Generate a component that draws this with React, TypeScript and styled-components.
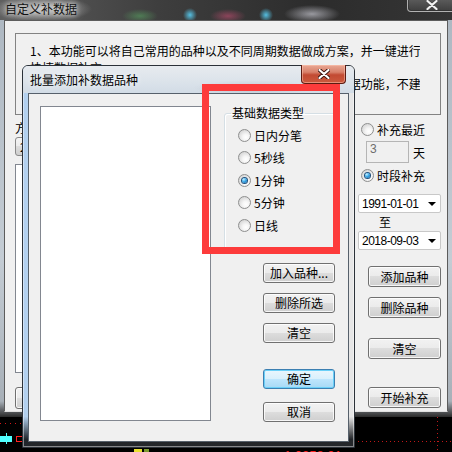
import React from 'react';
import styled, { createGlobalStyle, css } from 'styled-components';

const GlobalStyle = createGlobalStyle`
  html, body {
    margin: 0;
    padding: 0;
    background: #000;
  }
  body {
    font-family: "Noto Sans CJK SC", "Noto Sans", sans-serif;
    font-size: 12px;
    color: #000;
  }
  * {
    box-sizing: border-box;
  }
`;

const Screen = styled.div`
  position: relative;
  width: 452px;
  height: 452px;
  overflow: hidden;
  background: #000;
`;

/* ---------- background window ---------- */

const BgWindow = styled.div`
  height: 417px;
  display: flex;
  flex-direction: column;
`;

const BgTitleBar = styled.div`
  height: 20px;
  display: flex;
  justify-content: space-between;
  align-items: flex-start;
  padding-left: 5px;
  background:
    radial-gradient(ellipse 50px 13px at 42px 9px, rgba(205, 205, 205, 0.9), transparent),
    radial-gradient(ellipse 18px 7px at 140px 16px, rgba(90, 170, 100, 0.55), transparent),
    radial-gradient(circle 7px at 190px 15px, rgba(90, 215, 255, 0.85), transparent),
    radial-gradient(ellipse 18px 7px at 228px 16px, rgba(210, 80, 120, 0.55), transparent),
    radial-gradient(circle 7px at 266px 15px, rgba(90, 215, 255, 0.85), transparent),
    radial-gradient(ellipse 28px 9px at 312px 14px, rgba(225, 225, 235, 0.6), transparent),
    linear-gradient(to right, #5e5e5e 0%, #3e3e3e 35%, #2c2c2c 70%, #353535 100%);
`;

const BgTitle = styled.span`
  margin-top: 2px;
  font-size: 12px;
  line-height: 14px;
  color: #111;
  text-shadow: 0 0 5px #e8e8e8, 0 0 8px #d0d0d0;
`;

const BgClose = styled.div`
  width: 49px;
  height: 13px;
  margin-top: -1px;
  margin-right: -4px;
  display: flex;
  align-items: center;
  justify-content: center;
  border: 1px solid rgba(200, 200, 200, 0.8);
  border-top: none;
  border-radius: 0 0 4px 4px;
  background: linear-gradient(rgba(120, 120, 120, 0.6), rgba(70, 70, 70, 0.6));
  box-shadow: inset 0 0 0 1px rgba(40, 40, 40, 0.5);
`;

const BgFrame = styled.div`
  flex: 1;
  display: flex;
  padding: 0 4px 5px 4px;
  background: linear-gradient(#aeb8c2 0%, #c4ccd4 60%, #a8b0b8 96%, #2a2a2a 100%);
`;

const BgClient = styled.div`
  flex: 1;
  display: flex;
  flex-direction: column;
  background: #f0f0f0;
  border: 1px solid #5c5c5c;
  border-bottom-color: #e0e0e0;
`;

const InfoPanel = styled.div`
  height: 82px;
  margin: 12px 6px 0 10px;
  padding: 9px 0 0 14px;
  border: 1px solid #828282;
  line-height: 16.5px;
  overflow: hidden;
`;

const InfoLine = styled.div`
  white-space: nowrap;
  overflow: hidden;
  width: 390px;
`;

const BgBody = styled.div`
  flex: 1;
  display: flex;
  justify-content: space-between;
  padding: 6px 6px 0 10px;
`;

const BgLeftColumn = styled.div`
  width: 160px;
  display: flex;
  flex-direction: column;
`;

const FieldLabel = styled.div`
  line-height: 14px;
`;

const SchemeCombo = styled.div`
  height: 19px;
  margin-top: 2px;
  padding-left: 4px;
  border: 1px solid #8a8a8a;
  border-radius: 3px;
  background: linear-gradient(#f4f4f4 0%, #ebebeb 49%, #dcdcdc 50%, #cfcfcf 100%);
  line-height: 17px;
`;

const SchemeList = styled.div`
  height: 209px;
  margin-top: 8px;
  border: 1px solid #828790;
  background: #fff;
`;

const BgRightColumn = styled.div`
  width: 83px;
  display: flex;
  flex-direction: column;
`;

const RadioRow = styled.label<{ $indent?: number; $height?: number; $gap?: number }>`
  height: ${p => p.$height ?? 16}px;
  display: flex;
  align-items: center;
  gap: ${p => p.$gap ?? 3}px;
  padding-left: ${p => p.$indent ?? 3}px;
  white-space: nowrap;
`;

const RadioDot = styled.span<{ $checked?: boolean }>`
  width: 13px;
  height: 13px;
  flex-shrink: 0;
  display: flex;
  align-items: center;
  justify-content: center;
  border-radius: 50%;
  border: 1px solid #8e8f8f;
  background: radial-gradient(circle at 62% 66%, #ffffff 0%, #f6f6f6 30%, #d8d8d8 75%, #c4c4c4 100%);

  &::after {
    content: '';
    display: ${p => (p.$checked ? 'block' : 'none')};
    width: 5px;
    height: 5px;
    border-radius: 50%;
    background: radial-gradient(circle at 35% 30%, #c4f0ff 0%, #3aa8e8 45%, #0c5a9c 100%);
    box-shadow: 0 0 0 1px #21507c;
  }
`;

const DaysRow = styled.div`
  display: flex;
  align-items: center;
  gap: 4px;
  margin: 4px 0 4px 8px;
`;

const DaysInput = styled.div`
  width: 43px;
  height: 22px;
  padding: 1px 0 0 3px;
  border: 1px solid #b5b5b5;
  background: #f0f0f0;
  color: #6d6d6d;
  font-family: "Liberation Sans", Arial, sans-serif;
  font-size: 12px;
  line-height: 12px;
`;

const DateCombo = styled.div<{ $gap?: number }>`
  height: 19px;
  margin-top: ${p => p.$gap ?? 0}px;
  padding: 0 4px 0 3px;
  display: flex;
  align-items: center;
  justify-content: space-between;
  border: 1px solid #c8c8c8;
  border-radius: 2px;
  background: #fff;
  font-family: "Liberation Sans", Arial, sans-serif;
  font-size: 12px;
  letter-spacing: -0.5px;
`;

const Caret = styled.span`
  width: 0;
  height: 0;
  border-left: 4px solid transparent;
  border-right: 4px solid transparent;
  border-top: 4px solid #000;
`;

const ToLabel = styled.div`
  height: 18px;
  line-height: 18px;
  padding-left: 21px;
`;

const Button = styled.button<{ $gap?: number; $focused?: boolean; $width?: number; $tall?: boolean }>`
  width: ${p => p.$width ?? 72}px;
  height: ${p => (p.$tall ? 22 : 20)}px;
  margin-top: ${p => p.$gap ?? 0}px;
  padding: 0;
  flex-shrink: 0;
  border: 1px solid #707070;
  border-radius: 3px;
  background: linear-gradient(#f2f2f2 0%, #ebebeb 49%, #dddddd 50%, #cfcfcf 100%);
  box-shadow: inset 0 0 0 1px rgba(255, 255, 255, 0.8);
  font-family: "Noto Sans CJK SC", sans-serif;
  font-size: 12px;
  line-height: 18px;
  color: #000;

  ${p =>
    p.$focused &&
    css`
      border-color: #3c7fb1;
      background: linear-gradient(#eaf6fd 0%, #d9f0fc 49%, #bee6fd 50%, #a7d9f5 100%);
      box-shadow: inset 0 0 0 1px #6ad0f8;
    `}
`;

const BgButton = styled(Button)`
  height: 21px;
  align-self: flex-end;
`;

/* ---------- chart strip at the bottom ---------- */

const ChartStrip = styled.div`
  height: 35px;
  background: #000;
`;

/* ---------- front dialog ---------- */

const Dialog = styled.div`
  position: absolute;
  left: 22px;
  top: 65px;
  width: 333px;
  height: 383px;
  display: flex;
  flex-direction: column;
  padding: 0 5px 5px 5px;
  border: 1px solid #2b3138;
  border-radius: 6px 6px 0 0;
  background:
    linear-gradient(to bottom, transparent 0, transparent 92%, rgba(25, 28, 32, 0.95) 98%),
    linear-gradient(to right, #aecdee 0, #b8d4f0 6px, #dfe3e8 6px, #e6e6e6 100%);
  box-shadow: inset 0 0 0 1px rgba(255, 255, 255, 0.45);
`;

const DialogTitleBar = styled.div`
  height: 27px;
  margin: 0 -5px;
  padding: 0 7px 0 7px;
  display: flex;
  justify-content: space-between;
  align-items: flex-start;
  border-radius: 5px 5px 0 0;
  background:
    radial-gradient(ellipse 60px 8px at 230px 22px, rgba(150, 160, 170, 0.35), transparent),
    linear-gradient(#e7ebef 0%, #dde4eb 50%, #d2dce6 100%);
`;

const DialogTitle = styled.span`
  margin-top: 7px;
  line-height: 14px;
  text-shadow: 0 0 6px #ffffff;
`;

const DialogClose = styled.div`
  width: 45px;
  height: 19px;
  margin-top: -1px;
  margin-right: 1px;
  display: flex;
  align-items: center;
  justify-content: center;
  border: 1px solid #5c1b12;
  border-top: none;
  border-radius: 0 0 4px 4px;
  background: linear-gradient(#e9a894 0%, #d8806a 40%, #c24a32 55%, #cc5a3e 100%);
  box-shadow: inset 0 0 0 1px rgba(255, 200, 180, 0.5);
`;

const DialogClient = styled.div`
  flex: 1;
  display: flex;
  align-items: flex-start;
  padding: 12px 0 0 11px;
  border: 1px solid #56606b;
  background: #f0f0f0;
`;

const CodeList = styled.div`
  width: 171px;
  height: 315px;
  flex-shrink: 0;
  border: 1px solid #828790;
  background: #fff;
`;

const DialogSide = styled.div`
  width: 112px;
  margin-left: 13px;
  display: flex;
  flex-direction: column;
`;

const GroupBox = styled.fieldset`
  height: 144px;
  margin: 0;
  padding: 4px 0 0 13px;
  border: 1px solid #d5dfe5;
  border-radius: 3px;
  box-shadow: inset 1px 1px 0 #fff;
`;

const GroupCaption = styled.legend`
  margin-left: -7px;
  padding: 0 1px;
  line-height: 14px;
`;

const SideButtons = styled.div`
  display: flex;
  flex-direction: column;
  align-self: flex-end;
  margin-right: 1px;
  margin-top: 13px;
`;

const Highlight = styled.div`
  position: absolute;
  left: 202px;
  top: 84px;
  width: 138px;
  height: 170px;
  border: 7px solid #fd3b3b;
  pointer-events: none;
`;

function CloseGlyph({ light }: { light?: boolean }) {
  return (
    <svg width="12" height="10" viewBox="0 0 12 10">
      <path
        d="M1.5 1 L10.5 9 M10.5 1 L1.5 9"
        stroke={light ? '#4a4a4a' : '#3a1410'}
        strokeWidth="4"
        strokeLinecap="round"
      />
      <path
        d="M1.5 1 L10.5 9 M10.5 1 L1.5 9"
        stroke={light ? '#f2f2f2' : '#ffffff'}
        strokeWidth="2.2"
        strokeLinecap="round"
      />
    </svg>
  );
}

function ChartBits() {
  return (
    <svg width="452" height="35" viewBox="0 0 452 35">
      <line x1="0" y1="6.5" x2="30" y2="6.5" stroke="#d01818" strokeDasharray="1 4" />
      <line x1="350" y1="24.5" x2="452" y2="24.5" stroke="#c01818" strokeDasharray="1 3" />
      <line x1="437.5" y1="0" x2="437.5" y2="35" stroke="#c01818" strokeDasharray="1 3" />
      <line x1="6.5" y1="16" x2="6.5" y2="27" stroke="#50ffff" />
      <rect x="0" y="19" width="12" height="6" fill="#50ffff" />
      <rect x="16.5" y="19.5" width="8" height="5" fill="none" stroke="#ff2020" />
      <rect x="134" y="32" width="8" height="3" fill="#e8e030" />
      <rect x="144" y="32" width="5" height="3" fill="#7a9a30" />
      <text x="284" y="43" fill="#ff2020" fontSize="13" fontFamily="Liberation Sans, Arial, sans-serif">
        1.0358.01
      </text>
    </svg>
  );
}

const dataTypes = ['日内分笔', '5秒线', '1分钟', '5分钟', '日线'];

export default function App() {
  return (
    <Screen>
      <GlobalStyle />

      <BgWindow>
        <BgTitleBar>
          <BgTitle>自定义补数据</BgTitle>
          <BgClose>
            <CloseGlyph light />
          </BgClose>
        </BgTitleBar>
        <BgFrame>
          <BgClient>
            <InfoPanel>
              <InfoLine>1、本功能可以将自己常用的品种以及不同周期数据做成方案，并一键进行</InfoLine>
              <InfoLine>快捷数据补充。</InfoLine>
              <InfoLine>2、本功能为辅助功能，数据量较大时请在收盘之后使用补数据功能，不建</InfoLine>
            </InfoPanel>
            <BgBody>
              <BgLeftColumn>
                <FieldLabel>方案名称</FieldLabel>
                <SchemeCombo>2018方案</SchemeCombo>
                <SchemeList />
                <Button $gap={14} $tall>
                  保存方案
                </Button>
              </BgLeftColumn>
              <BgRightColumn>
                <RadioRow>
                  <RadioDot />
                  补充最近
                </RadioRow>
                <DaysRow>
                  <DaysInput>3</DaysInput>
                  <span>天</span>
                </DaysRow>
                <RadioRow>
                  <RadioDot $checked />
                  时段补充
                </RadioRow>
                <DateCombo $gap={11}>
                  <span>1991-01-01</span>
                  <Caret />
                </DateCombo>
                <ToLabel>至</ToLabel>
                <DateCombo>
                  <span>2018-09-03</span>
                  <Caret />
                </DateCombo>
                <BgButton $gap={16} $width={73}>添加品种</BgButton>
                <BgButton $gap={10} $width={73}>删除品种</BgButton>
                <BgButton $gap={20} $width={73}>清空</BgButton>
                <BgButton $gap={28} $width={73}>开始补充</BgButton>
              </BgRightColumn>
            </BgBody>
          </BgClient>
        </BgFrame>
      </BgWindow>

      <ChartStrip>
        <ChartBits />
      </ChartStrip>

      <Dialog>
        <DialogTitleBar>
          <DialogTitle>批量添加补数据品种</DialogTitle>
          <DialogClose>
            <CloseGlyph />
          </DialogClose>
        </DialogTitleBar>
        <DialogClient>
          <CodeList />
          <DialogSide>
            <GroupBox>
              <GroupCaption>基础数据类型</GroupCaption>
              {dataTypes.map(t => (
                <RadioRow key={t} $indent={0} $height={22.5} $gap={3}>
                  <RadioDot $checked={t === '1分钟'} />
                  {t}
                </RadioRow>
              ))}
            </GroupBox>
            <SideButtons>
              <Button>加入品种...</Button>
              <Button $gap={10}>删除所选</Button>
              <Button $gap={10}>清空</Button>
              <Button $gap={26} $focused>确定</Button>
              <Button $gap={13}>取消</Button>
            </SideButtons>
          </DialogSide>
        </DialogClient>
      </Dialog>

      <Highlight />
    </Screen>
  );
}
